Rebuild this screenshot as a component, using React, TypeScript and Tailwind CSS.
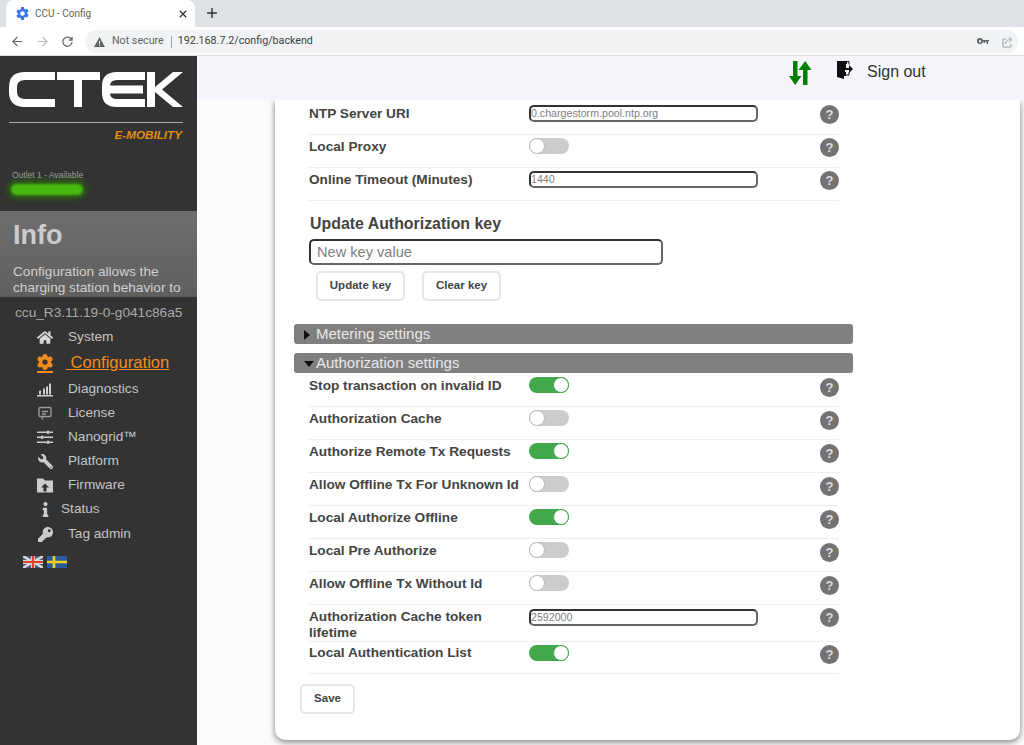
import { FaHome, FaWrench, FaInfo, FaKey } from "react-icons/fa";

const sans = "font-['Liberation_Sans',Arial,sans-serif]";

function Toggle({ on }: { on?: boolean }) {
  return (
    <div
      className={`mt-[3px] flex h-[16px] w-[40px] rounded-full ${on ? "justify-end bg-[#43a84b]" : "justify-start bg-[#cccccc]"}`}
    >
      <div className={`h-[16px] w-[16px] rounded-full border bg-white ${on ? "border-[#43a84b]" : "border-[#bbbbbb]"}`} />
    </div>
  );
}

function SmallInput({ value, low }: { value: string; low?: boolean }) {
  return (
    <div
      className={`flex h-[17px] w-[229px] items-center rounded-[5px] border-2 border-[#333333] border-b-[#666666] border-r-[#666666] text-[10.65px] text-[#808080] ${low ? "mt-[4px]" : "mt-[3px]"}`}
    >
      {value}
    </div>
  );
}

function Help({ low }: { low?: boolean }) {
  return (
    <div
      className={`ml-auto flex h-[19px] w-[19px] items-center justify-center rounded-full bg-[#737373] text-[13px] font-bold text-[#dddddd] ${low ? "mt-[4px]" : "mt-[3px]"}`}
    >
      ?
    </div>
  );
}

function Row({
  label,
  children,
  tall,
  tight,
  lowHelp,
}: {
  label: string;
  children: React.ReactNode;
  tall?: boolean;
  tight?: boolean;
  lowHelp?: boolean;
}) {
  return (
    <div className={`flex w-[530px] border-b border-[#eeeeee] ${tall ? "h-[37px]" : tight ? "h-[32px]" : "h-[33px]"}`}>
      <div
        className={`w-[220px] text-[13.65px] font-bold text-[#444444] ${tall ? "pt-[4px] leading-[16px]" : tight ? "pt-[1px] leading-[20px]" : "pt-[2px] leading-[20px]"}`}
      >
        {label}
      </div>
      {children}
      <Help low={lowHelp} />
    </div>
  );
}

function Section({ open, label }: { open?: boolean; label: string }) {
  return (
    <div className="flex h-[20px] w-[559px] items-center rounded-[3px] bg-[#808080] pl-[10px] pt-[1px] text-[15px] text-[#e8e8e8]">
      <svg viewBox="0 0 12 10" className="h-[10px] w-[12px]">
        {open ? <polygon points="0,2 10,2 5,8" fill="#111" /> : <polygon points="0,0 6,5 0,10" fill="#111" />}
      </svg>
      {label}
    </div>
  );
}

function PlainButton({ label, className }: { label: string; className: string }) {
  return (
    <div className={`flex h-[30px] items-center justify-center rounded-[5px] border-2 border-[#e6e6e6] bg-white text-[11.5px] font-bold text-[#444444] ${className}`}>
      {label}
    </div>
  );
}

function Logo() {
  return (
    <svg viewBox="9 71 175 38" className="h-[38px] w-[175px]" fill="none" stroke="#fff" strokeWidth="8">
      <path d="M55 76H25Q13 76 13 87V92Q13 103 25 103H55" />
      <path d="M57 76H100M78 76V107" />
      <path d="M145 76H117Q106 76 106 86V93Q106 103 117 103H145M108 89.5H143" />
      <path d="M151 72V107" />
      <polygon points="155,87 173,72 183,72 162,89.5 183,107 173,107 155,92" fill="#fff" stroke="none" />
    </svg>
  );
}

// favicon gear, toothed
function Gear({ className, fill }: { className: string; fill: string }) {
  return (
    <svg viewBox="0 0 16 16" className={className}>
      <path
        fill={fill}
        fillRule="evenodd"
        d="M6.3 0h3.4l.5 2.2 1.4.8 2.2-.7 1.7 3-1.7 1.5v1.6l1.7 1.5-1.7 3-2.2-.7-1.4.8L9.700 16H6.300l-.5-2.200-1.400-.8-2.200.7-1.700-3 1.700-1.500V7.600L.5 6.100l1.700-3 2.200.7 1.400-.8zM8 5.200a2.800 2.800 0 1 0 0 5.600 2.800 2.800 0 0 0 0-5.600z"
      />
    </svg>
  );
}

// sidebar gear has round lobes instead of teeth
function FlowerGear() {
  return (
    <svg viewBox="0 0 16 16" className="h-[16px] w-[16px]" fill="#f28c1e">
      <circle cx="8" cy="8" r="6" />
      <circle cx="8" cy="2.500" r="2.500" />
      <circle cx="8" cy="13.500" r="2.500" />
      <circle cx="3" cy="5" r="2.500" />
      <circle cx="13" cy="5" r="2.500" />
      <circle cx="3" cy="11" r="2.500" />
      <circle cx="13" cy="11" r="2.500" />
      <circle cx="8" cy="8" r="2.600" fill="#333333" />
    </svg>
  );
}

const navIcon = "h-[15px] w-[16px] text-[#cccccc]";

function Item({ label, icon, status, className }: { label: string; icon: React.ReactNode; status?: boolean; className?: string }) {
  return (
    <div className={`flex h-[24px] items-center text-[13.65px] text-[#c4c4c4] ${className ?? ""}`}>
      <div className={`flex w-[16px] justify-center ${status ? "mr-[16px]" : "mr-[15px]"}`}>{icon}</div>
      <span className={status ? "-ml-[8px]" : ""}>{label}</span>
    </div>
  );
}

function Sidebar() {
  return (
    <aside className={`${sans} h-[689px] w-[197px] shrink-0 overflow-hidden bg-[#333333]`}>
      <div className="pl-[9px] pt-[15px]">
        <Logo />
      </div>
      <div className="ml-[9px] mt-[13px] h-[1px] w-[174px] bg-[#a8a8a8]" />
      <div className="mr-[15px] mt-[5px] text-right text-[11.7px] font-bold italic leading-[14px] text-[#e08a14]">E-MOBILITY</div>
      <div className="pl-[12px] pt-[27px] text-[8.5px] leading-[12px] text-[#a0a0a0]">Outlet 1 - Available</div>
      <div className="ml-[11px] mt-[3px] h-[11px] w-[72px] rounded-full bg-[#46b80f] shadow-[0_0_6px_3px_#2a6e0a] blur-[1px]" />
      <div className="mt-[16px] h-[86px] overflow-hidden bg-gradient-to-b from-[#6e6e6e] to-[#5f5f5f] px-[13px] pt-[7px]">
        <div className="text-[27px] font-bold leading-[34px] text-[#cccccc]">Info</div>
        <div className="mt-[12px] text-[13.65px] leading-[16px] text-[#d0d0d0]">
          Configuration allows the
          <br />
          charging station behavior to
        </div>
      </div>
      <div className="pl-[15px] pt-[8px] text-[13.65px] leading-[16px] text-[#a8a8a8]">ccu_R3.11.19-0-g041c86a5</div>
      <nav className="pl-[37px] pt-[4px]">
        <Item label="System" icon={<FaHome className="h-[15px] w-[16px] text-[#d8d8d8]" />} />
        <div className="flex h-[28px] items-center text-[16.6px] text-[#f28c1e]">
          <div className="mr-[13px] border-b-2 border-[#f28c1e] pb-[1px]">
            <FlowerGear />
          </div>
          <span className="underline">&nbsp;Configuration</span>
        </div>
        <Item
          label="Diagnostics"
          icon={
            <svg viewBox="0 0 16 14" className={navIcon} fill="#cccccc">
              <path d="M2 8h2v4H2zM6 6h2v6H6zM9 4h2v8H9zM12 1h2v11h-2zM0 12.500h16V14H0z" />
            </svg>
          }
        />
        <Item
          label="License"
          icon={
            <svg viewBox="0 0 16 14" className={navIcon} fill="none" stroke="#999999" strokeWidth="1.4">
              <rect x="2" y="1" width="12" height="9" rx="1" />
              <path d="M5 13l1-3M5 5h6M5 7.500h4" />
            </svg>
          }
        />
        <Item
          label="Nanogrid™"
          icon={
            <svg viewBox="0 0 16 14" className={navIcon} fill="#cccccc">
              <path d="M0 1h9v1.600H0zM13 1h3v1.600h-3zM0 6h3v1.600H0zM7 6h9v1.600H7zM0 11h9v1.600H0zM13 11h3v1.600h-3z" />
              <circle cx="11" cy="1.800" r="1.800" />
              <circle cx="5" cy="6.800" r="1.800" />
              <circle cx="11" cy="11.800" r="1.800" />
            </svg>
          }
        />
        <Item label="Platform" icon={<FaWrench className="h-[15px] w-[15px] -scale-x-100 text-[#cccccc]" />} />
        <Item
          label="Firmware"
          icon={
            <svg viewBox="0 0 16 14" className={navIcon} fill="#cccccc">
              <path fillRule="evenodd" d="M0 0h6l2 2h8v12H0zM8 5L4 9h2.500v4h3V9H12z" />
            </svg>
          }
        />
        <Item label="Status" status icon={<FaInfo className="h-[15px] w-[15px] text-[#cccccc]" />} />
        <Item label="Tag admin" className="mt-[1px]" icon={<FaKey className="h-[15px] w-[15px] text-[#cccccc]" />} />
      </nav>
      <div className="flex gap-[4px] pl-[23px] pt-[10px]">
        <svg viewBox="0 0 20 12" className="h-[12px] w-[20px]">
          <rect width="20" height="12" fill="#4a5a86" />
          <path d="M0 0L20 12M20 0L0 12" stroke="#d8d8d8" strokeWidth="2.400" />
          <path d="M10 0V12M0 6H20" stroke="#d8d8d8" strokeWidth="4" />
          <path d="M10 0V12M0 6H20" stroke="#e0442c" strokeWidth="2.200" />
        </svg>
        <svg viewBox="0 0 20 12" className="h-[12px] w-[20px]">
          <rect width="20" height="12" fill="#2c5a9c" />
          <path d="M7 0V12M0 6H20" stroke="#f2d21c" strokeWidth="2.600" />
        </svg>
      </div>
    </aside>
  );
}

function TopBar() {
  return (
    <div className="flex h-[44px] shrink-0 bg-[#f5f5fb]">
      <svg viewBox="0 0 26 24" className="ml-[592px] mt-[5px] h-[24px] w-[26px]" fill="#008000">
        <path d="M4 0h4.500v15h4L6.200 24 0 15h4zM18.500 24H14V9h-4.500L16.200 0l6.300 9h-4z" />
      </svg>
      <svg viewBox="0 0 16 18" className="ml-[22px] mt-[5px] h-[18px] w-[16px]">
        <path fill="#111" d="M0 0h10v3H9v4H8v4h1v4H7v3l-7-2z" />
        <path fill="none" stroke="#111" strokeWidth="1" d="M5 .5h7v3M12 11v3H9" />
        <path fill="#111" d="M8 7h4V4l4 4-4 4V9H8z" />
      </svg>
      <div className={`${sans} ml-[14px] mt-[5px] text-[16px] leading-[21px] text-[#333333]`}>Sign out</div>
    </div>
  );
}

function Content() {
  return (
    <div className={`${sans} min-h-0 flex-1 overflow-hidden bg-[#fbfbfb] pb-[6px] pl-[78px] pr-[4px]`}>
      <div className="rounded-b-[10px] bg-white pb-[26px] pl-[19px] pt-[2px] shadow-[0_2px_6px_rgba(0,0,0,0.5)]">
        <div className="pl-[15px]">
          <Row label="NTP Server URI">
            <SmallInput value="0.chargestorm.pool.ntp.org" />
          </Row>
          <Row label="Local Proxy">
            <Toggle />
          </Row>
          <Row label="Online Timeout (Minutes)">
            <SmallInput value="1440" />
          </Row>
          <div className="ml-[1px] mt-[13px] text-[15.9px] font-bold leading-[20px] text-[#444444]">Update Authorization key</div>
          <div className="mt-[5px] flex h-[26px] w-[354px] items-center rounded-[5px] border-2 border-[#333333] border-b-[#666666] border-r-[#666666] pl-[6px] pt-[1px] text-[14.6px] text-[#808080]">
            New key value
          </div>
          <div className="ml-[7px] mt-[6px] flex gap-[17px]">
            <PlainButton label="Update key" className="w-[89px]" />
            <PlainButton label="Clear key" className="w-[79px]" />
          </div>
        </div>
        <div className="mt-[23px]">
          <Section label="Metering settings" />
        </div>
        <div className="mt-[9px]">
          <Section open label="Authorization settings" />
        </div>
        <div className="pl-[15px] pt-[1px]">
          <Row lowHelp label="Stop transaction on invalid ID">
            <Toggle on />
          </Row>
          <Row lowHelp label="Authorization Cache">
            <Toggle />
          </Row>
          <Row lowHelp label="Authorize Remote Tx Requests">
            <Toggle on />
          </Row>
          <Row lowHelp label="Allow Offline Tx For Unknown Id">
            <Toggle />
          </Row>
          <Row lowHelp label="Local Authorize Offline">
            <Toggle on />
          </Row>
          <Row lowHelp label="Local Pre Authorize">
            <Toggle />
          </Row>
          <Row lowHelp label="Allow Offline Tx Without Id">
            <Toggle />
          </Row>
          <Row label="Authorization Cache token lifetime" tall>
            <SmallInput low value="2592000" />
          </Row>
          <Row label="Local Authentication List" tight>
            <Toggle on />
          </Row>
        </div>
        <PlainButton label="Save" className="ml-[6px] mt-[10px] w-[55px]" />
      </div>
    </div>
  );
}

function BrowserChrome() {
  return (
    <div className="shrink-0 font-['Roboto',sans-serif]">
      <div className="flex h-[27px] bg-[#dee1e6] pl-[6px]">
        <div className="flex h-[27px] w-[189px] items-center rounded-t-[8px] bg-white pl-[10px] pr-[8px] text-[10px] text-[#5f6368]">
          <Gear className="mr-[6px] h-[13px] w-[13px]" fill="#3b78e7" />
          <span>CCU - Config</span>
          <svg viewBox="0 0 10 10" className="ml-auto h-[8px] w-[8px]" stroke="#333" strokeWidth="1.6">
            <path d="M1 1l8 8M9 1l-8 8" />
          </svg>
        </div>
        <svg viewBox="0 0 10 10" className="ml-[12px] mt-[8px] h-[10px] w-[10px]" stroke="#333" strokeWidth="1.4">
          <path d="M5 0v10M0 5h10" />
        </svg>
      </div>
      <div className="flex h-[29px] items-center border-b border-[#dadce0] bg-white pt-[1px]">
        <svg viewBox="0 0 12 12" className="ml-[12px] h-[11px] w-[11px]" fill="none" stroke="#5f6368" strokeWidth="1.3">
          <path d="M11 6H1M6 1L1 6l5 5" />
        </svg>
        <svg viewBox="0 0 12 12" className="ml-[14px] h-[11px] w-[11px]" fill="none" stroke="#b8babd" strokeWidth="1.3">
          <path d="M1 6h10M6 1l5 5-5 5" />
        </svg>
        <svg viewBox="0 0 12 12" className="ml-[14px] h-[11px] w-[11px]" fill="none" stroke="#5f6368" strokeWidth="1.3">
          <path d="M10.500 4A5 5 0 1 0 11 6.500M11 1v3.500H7.500" />
        </svg>
        <div className="ml-[12px] flex h-[23px] w-[933px] items-center rounded-full bg-[#f1f3f4] pl-[9px] pr-[4px] text-[10.7px]">
          <svg viewBox="0 0 12 11" className="h-[10px] w-[11px]" fill="#5f6368">
            <path d="M6 0l6 11H0zM5.400 4v3.500h1.200V4zM5.400 8.300v1.200h1.200V8.300z" fillRule="evenodd" />
          </svg>
          <span className="ml-[7px] text-[#5f6368]">Not secure</span>
          <div className="ml-[7px] h-[12px] w-[1px] bg-[#9aa0a6]" />
          <span className="ml-[6px] text-[#3c4043]">192.168.7.2/config/backend</span>
          <svg viewBox="0 0 12 7" className="ml-auto h-[7px] w-[12px]" fill="#5f6368">
            <path fillRule="evenodd" d="M3 0a3 3 0 0 1 2.800 2H12v1.500h-1V6H9.500V3.500H8V5H6.500V3.500h-.7A3 3 0 1 1 3 0zm0 2a1.200 1.200 0 1 0 0 2.400A1.200 1.200 0 0 0 3 2z" />
          </svg>
          <svg viewBox="0 0 12 12" className="ml-[13px] h-[12px] w-[12px]" fill="none" stroke="#9aa0a6" strokeWidth="1">
            <path d="M4 3H1v8h8V8M3.500 8c0-3 2-4.500 5-4.500M7 1l3 2.500L7 6" />
          </svg>
        </div>
      </div>
    </div>
  );
}

export default function App() {
  return (
    <div className="flex h-[745px] w-[1024px] flex-col overflow-hidden bg-white">
      <BrowserChrome />
      <div className="flex min-h-0 flex-1">
        <Sidebar />
        <div className="flex min-w-0 flex-1 flex-col">
          <TopBar />
          <Content />
        </div>
      </div>
    </div>
  );
}
